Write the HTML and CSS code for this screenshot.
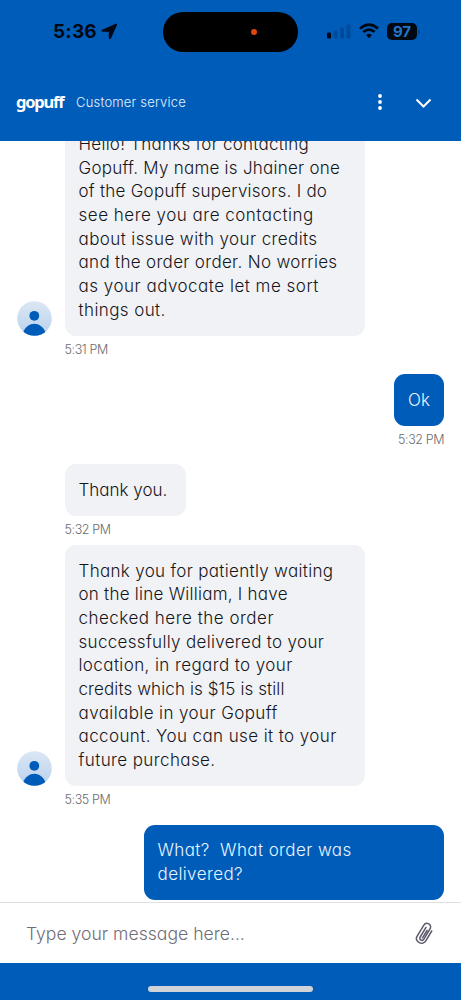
FILE: index.html
```html
<!DOCTYPE html>
<html lang="en">
<head>
<meta charset="utf-8">
<meta name="viewport" content="width=device-width, initial-scale=1">
<title>Gopuff customer service</title>
<link rel="stylesheet" href="styles.css">
</head>
<body>
<div class="screen">
  <header class="top">
    <div class="status">
      <div class="clock"><span>5:36</span>
        <svg width="17" height="17" viewBox="0 0 17 17"><path d="M14.800.800 1.200 6.700c-1.100.5-.9 2.100.4 2.100h6.200V15c0 1.300 1.600 1.500 2.100.4L16 1.900c.4-.8-.4-1.500-1.200-1.100z" fill="#000814"/></svg>
      </div>
      <div class="island"><i class="rec"></i></div>
      <div class="signals">
        <svg width="24" height="16" viewBox="0 0 24 16"><rect x="0" y="9.500" width="4" height="6" rx="1" fill="#000814"/><g fill="#004a9b"><rect x="6.500" y="7.500" width="4" height="8" rx="1"/><rect x="13" y="4.500" width="4" height="11" rx="1"/><rect x="19.500" y="1.500" width="4" height="14" rx="1"/></g></svg>
        <svg class="wifi" width="20" height="16" viewBox="0 0 20 16"><g fill="none" stroke="#000814" stroke-width="2.700"><path d="M1 5.500Q10-2.300 19 5.500"/><path d="M4.300 9.100q5.700-5 11.400 0"/></g><path d="M7 11.900q3-2.500 6 0l-3 3.300z" fill="#000814"/></svg>
        <span class="battery">97</span><i class="nub"></i>
      </div>
    </div>
    <div class="bar">
      <span class="logo">gopuff</span>
      <span class="subtitle">Customer service</span>
      <svg class="dots" width="6" height="18" viewBox="0 0 6 18" fill="#fff"><circle cx="3" cy="3" r="1.900"/><circle cx="3" cy="9" r="1.900"/><circle cx="3" cy="15" r="1.900"/></svg>
      <svg class="chevron" width="17" height="11" viewBox="0 0 17 11"><path d="m1.500 1.500 7 7 7-7" fill="none" stroke="#fff" stroke-width="2"/></svg>
    </div>
  </header>

  <main class="chat">
    <div class="row">
      <svg class="avatar" viewBox="0 0 35 35"><use href="#person"/></svg>
      <p class="bubble wide"><span class="snug">Hello! Thanks for contacting</span><span class="snug">Gopuff. My name is Jhainer one</span><span class="snug">of the Gopuff supervisors. I do</span><span class="airy">see here you are contacting</span><span class="open">about issue with your credits</span><span>and the order order. No worries</span><span class="airy">as your advocate let me sort</span><span class="open">things out.</span></p>
    </div>
    <time class="time">5:31 PM</time>
    <div class="row mine gap"><p class="bubble"><span class="flat">Ok</span></p></div>
    <time class="time mine">5:32 PM</time>
    <div class="row gap"><p class="bubble alone"><span class="flat">Thank you.</span></p></div>
    <time class="time">5:32 PM</time>
    <div class="row near">
      <svg class="avatar" viewBox="0 0 35 35"><use href="#person"/></svg>
      <p class="bubble wide"><span>Thank you for patiently waiting</span><span class="snug">on the line William, I have</span><span class="airy">checked here the order</span><span>successfully delivered to your</span><span class="open">location, in regard to your</span><span class="tight">credits which is $15 is still</span><span class="open">available in your Gopuff</span><span class="open">account. You can use it to your</span><span class="open">future purchase.</span></p>
    </div>
    <time class="time">5:35 PM</time>
    <div class="row mine gap"><p class="bubble wide"><span class="open">What?&nbsp; What order was</span><span class="open">delivered?</span></p></div>
  </main>

  <div class="composer">
    <span class="hint">Type your message here...</span>
    <svg width="18" height="23" viewBox="0 0 18 23" fill="none" stroke="#5d5b69" stroke-width="1.500" stroke-linecap="round" stroke-linejoin="round"><path d="m16.700 9-5.900 9.900c-1.300 2.200-4 3.100-6.500 1.800C1.500 19.200.6 16.700 2 14.300l6.700-11C9.900 1.300 12 .9 13.800 1.900s2.300 3.100 1.200 5l-6.100 10.200c-.7 1.200-1.900 1.500-3 .9s-1.400-1.800-.7-3l5.800-9.600M12 8.500l-4.500 7.400"/></svg>
  </div>
  <footer class="home"><i class="handle"></i></footer>
</div>
<svg class="defs" width="0" height="0">
  <defs>
    <linearGradient id="sky" x1="0" y1="0" x2="0" y2="1"><stop offset="0" stop-color="#dce7f4"/><stop offset="1" stop-color="#b8d1ed"/></linearGradient>
    <clipPath id="disc"><circle cx="17.500" cy="17.500" r="17.300"/></clipPath>
    <g id="person" clip-path="url(#disc)"><rect width="35" height="35" fill="url(#sky)"/><circle cx="17.300" cy="14.800" r="4.900" fill="#005cb9"/><path d="M5.800 35v-3.200c5-12 18-12 23 0V35z" fill="#005cb9"/></g>
  </defs>
</svg>
</body>
</html>
```
FILE: styles.css
```css
* { box-sizing: border-box; }
body { margin: 0; background: #fff; font-family: Inter, "Liberation Sans", sans-serif; font-weight: 300; font-feature-settings: "cv11"; }
svg { display: block; flex: none; }
.defs { position: absolute; }
.screen { width: 461px; height: 1000px; display: flex; flex-direction: column; overflow: hidden; }
.top { height: 140.500px; flex: none; background: #005cb9; }
.status { height: 64px; display: grid; grid-template-columns: 163px 135px 163px; align-items: center; }
.clock { display: flex; align-items: center; gap: 4px; padding: 0 0 1px 53px; color: #000814; font-size: 19px; font-weight: 700; letter-spacing: .2px; }
.island { height: 40px; border-radius: 20px; background: #000; display: flex; align-items: center; justify-content: flex-end; padding-right: 41px; }
.rec { width: 6px; height: 6px; border-radius: 50%; background: #e04410; }
.signals { display: flex; align-items: center; padding: 0 0 2px 29px; }
.wifi { margin-left: 8px; }
.battery { width: 30px; height: 17px; margin-left: 8px; border-radius: 5px; background: #000814; color: #2374c8; font-size: 15px; font-weight: 700; line-height: 17px; text-align: center; }
.nub { width: 2px; height: 5px; margin-left: 1px; border-radius: 0 2px 2px 0; background: #004a9b; }
.bar { height: 76px; display: flex; align-items: center; padding: 0 29px 0 16px; color: #fff; }
.logo { width: 60px; font-family: "Noto Sans", sans-serif; font-size: 16.500px; font-weight: 700; line-height: 24px; letter-spacing: -1.200px; }
.subtitle { font-size: 13px; letter-spacing: .2px; color: #e4f2ff; }
.dots { margin-left: auto; }
.chevron { margin: 3px 0 0 32px; }
.chat { flex: 1; min-height: 0; display: flex; flex-direction: column; justify-content: flex-end; overflow: hidden; padding: 0 17px 2px; }
.row { display: flex; align-items: flex-end; flex: none; }
.row.mine { justify-content: flex-end; }
.gap { margin-top: 12.600px; }
.near { margin-top: 3.100px; }
.avatar { width: 35px; height: 35px; margin-right: 12.500px; }
.bubble { margin: 0; padding: 14.600px 14px 13.400px; border-radius: 11px; background: #f1f2f5; color: #15161c; font-size: 17px; line-height: 23.650px; letter-spacing: .32px; white-space: nowrap; }
.bubble span { display: block; }
.bubble .flat { letter-spacing: 0; }
.bubble .tight { letter-spacing: .1px; }
.bubble .snug { letter-spacing: .25px; }
.bubble .open { letter-spacing: .4px; }
.bubble .airy { letter-spacing: .5px; }
.bubble.wide { width: 300.500px; }
.bubble.alone { width: 121px; margin-left: 47.500px; }
.mine .bubble { background: #005cb9; color: #e8f5ff; }
.time { flex: none; height: 26px; line-height: 27px; padding-left: 47.500px; color: #6b6b6f; font-size: 12.500px; letter-spacing: -.4px; }
.time.mine { text-align: right; }
.composer { height: 61px; flex: none; display: flex; align-items: center; justify-content: space-between; padding: 0 28px 0 26px; border-top: 1px solid #dedfe1; }
.hint { color: #6f6d78; font-size: 17.600px; }
.home { height: 37px; flex: none; display: flex; justify-content: center; padding-top: 23px; background: #005cb9; }
.handle { width: 165px; height: 5.500px; border-radius: 3px; background: #d0d4d8; }
```
